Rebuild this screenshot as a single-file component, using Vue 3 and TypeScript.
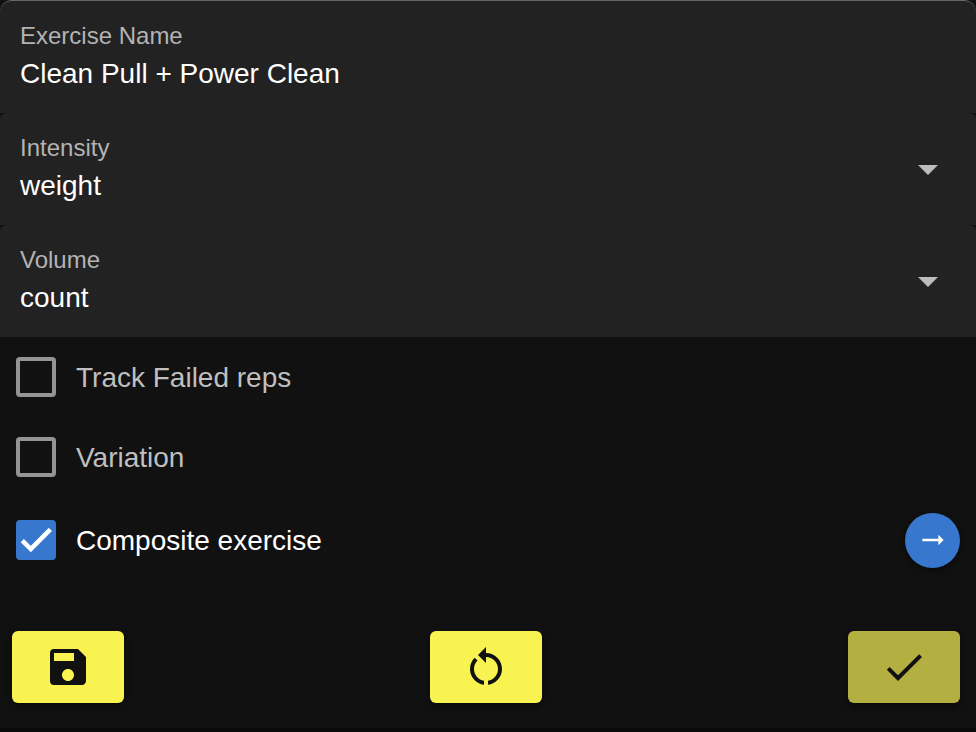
<script setup lang="ts">
import { reactive, ref } from 'vue'

const name = ref('Clean Pull + Power Clean')

const selects = reactive([
  { id: 'intensity', label: 'Intensity', value: 'weight', options: ['weight', 'percentage', 'none'] },
  { id: 'volume', label: 'Volume', value: 'count', options: ['count', 'time', 'distance'] },
])

const flags = reactive([
  { id: 'failed-reps', label: 'Track Failed reps', checked: false, opens: false },
  { id: 'variation', label: 'Variation', checked: false, opens: false },
  { id: 'composite', label: 'Composite exercise', checked: true, opens: true },
])
</script>

<template>
  <form class="editor" @submit.prevent>
    <section class="fields">
      <div class="field outlined">
        <label class="field-label" for="exercise-name">Exercise Name</label>
        <input id="exercise-name" v-model="name" class="field-value" type="text" />
      </div>
      <div v-for="s in selects" :key="s.id" class="field">
        <label class="field-label" :for="s.id">{{ s.label }}</label>
        <select :id="s.id" v-model="s.value" class="field-value">
          <option v-for="o in s.options" :key="o">{{ o }}</option>
        </select>
        <svg class="caret" viewBox="0 0 20 10" aria-hidden="true"><path d="M0 0h20L10 10z" /></svg>
      </div>
    </section>

    <section class="flags">
      <div v-for="f in flags" :key="f.id" class="flag" :class="{ on: f.checked, tall: f.opens }">
        <label class="flag-label" :for="f.id">
          <span class="box">
            <input :id="f.id" v-model="f.checked" type="checkbox" />
            <svg v-if="f.checked" class="tick" viewBox="0 0 24 24" aria-hidden="true">
              <path d="M1.73 12.41 8.1 18.78 22.79 4.09" />
            </svg>
          </span>
          <span class="flag-text">{{ f.label }}</span>
        </label>
        <button v-if="f.opens && f.checked" type="button" class="round" aria-label="Edit composite exercise">
          <svg viewBox="0 0 24 24" aria-hidden="true"><path d="M16.01 11H4v2h12.01v3L20 12l-3.99-4z" /></svg>
        </button>
      </div>
    </section>

    <footer class="actions">
      <button type="button" class="action" aria-label="Save">
        <svg viewBox="0 0 24 24" aria-hidden="true">
          <path d="M17 3H5a2 2 0 0 0-2 2v14a2 2 0 0 0 2 2h14c1.1 0 2-.9 2-2V7l-4-4zm-5 16c-1.66 0-3-1.34-3-3s1.34-3 3-3 3 1.34 3 3-1.34 3-3 3zm3-10H5V5h10v4z" />
        </svg>
      </button>
      <button type="button" class="action" aria-label="Reset">
        <svg viewBox="0 0 24 24" aria-hidden="true">
          <path d="M12 5V2L8 6l4 4V7c3.31 0 6 2.69 6 6 0 2.97-2.17 5.43-5 5.91v2.02c3.95-.49 7-3.85 7-7.93 0-4.42-3.58-8-8-8z" />
          <path d="M6 13c0-1.65.67-3.15 1.76-4.24L6.34 7.34C4.9 8.79 4 10.79 4 13c0 4.08 3.05 7.44 7 7.93v-2.02c-2.83-.48-5-2.94-5-5.91z" />
        </svg>
      </button>
      <button type="submit" class="action muted" aria-label="Confirm">
        <svg viewBox="0 0 24 24" aria-hidden="true">
          <path d="M9 16.17 4.83 12l-1.42 1.41L9 19 21 7l-1.41-1.41z" />
        </svg>
      </button>
    </footer>
  </form>
</template>

<style>
body {
  background: #090909;
}
</style>

<style scoped>
.editor {
  box-sizing: border-box;
  padding-bottom: 25px;
  background: #111;
  color: #fff;
  font-family: 'Helvetica Neue', Helvetica, 'Liberation Sans', Arial, sans-serif;
  font-size: 28px;
}

.field {
  position: relative;
  display: flex;
  flex-direction: column;
  gap: 6px;
  padding: 21px 20px;
  background: #222;
  border-radius: 6px 6px 0 0;
}

.outlined {
  border-top: 1px solid #666;
  border-radius: 12px 12px 0 0;
}

.field-label {
  color: #b3b3b3;
  font-size: 24px;
  line-height: 28px;
}

.field-value {
  appearance: none;
  width: 100%;
  height: 36px;
  margin: 0;
  padding: 0;
  border: 0;
  outline: 0;
  background: transparent;
  color: #fff;
  font: inherit;
  line-height: 36px;
}

.field-value option {
  background: #222;
}

.caret {
  position: absolute;
  top: 52px;
  right: 38px;
  width: 20px;
  height: 10px;
  fill: #bdbdbd;
  pointer-events: none;
}

.flag {
  display: flex;
  align-items: center;
  justify-content: space-between;
  height: 80px;
  padding: 0 16px;
  color: #bfbfbf;
}

.flag.tall {
  height: 86px;
}

.flag.on {
  color: #fff;
}

.flag-label {
  display: flex;
  align-items: center;
  gap: 20px;
}

.flag-text {
  padding-top: 2px;
  line-height: 36px;
}

.box {
  position: relative;
  display: flex;
}

.box input {
  appearance: none;
  box-sizing: border-box;
  width: 40px;
  height: 40px;
  margin: 0;
  border: 4px solid #949494;
  border-radius: 4px;
}

.box input:checked {
  border-color: #3777cd;
  background: #3777cd;
}

.tick {
  position: absolute;
  top: 4px;
  left: 4px;
  width: 32px;
  height: 32px;
  fill: none;
  stroke: #fff;
  stroke-width: 3.4;
  pointer-events: none;
}

button {
  display: flex;
  align-items: center;
  justify-content: center;
  margin: 0;
  padding: 0;
  border: 0;
  cursor: pointer;
}

.round {
  width: 55px;
  height: 55px;
  border-radius: 50%;
  background: #3777cd;
  box-shadow: 0 2px 6px rgb(0 0 0 / 50%);
}

.round svg {
  width: 32px;
  height: 32px;
  fill: #fff;
}

.actions {
  display: flex;
  justify-content: space-between;
  padding: 48px 16px 0 12px;
}

.action {
  width: 112px;
  height: 72px;
  border-radius: 6px;
  background: #f9f352;
  box-shadow: 0 3px 8px rgb(0 0 0 / 50%);
}

.action.muted {
  background: #b3af40;
}

.action svg {
  width: 48px;
  height: 48px;
  fill: #111;
}
</style>
